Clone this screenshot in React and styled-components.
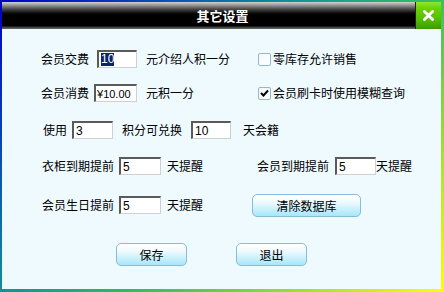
import React from 'react'
import styled, { createGlobalStyle } from 'styled-components'

const GlobalStyle = createGlobalStyle`
  html, body {
    margin: 0;
    padding: 0;
    background: #ffffff;
  }
  body {
    font-family: "Liberation Sans", "Noto Sans CJK SC", sans-serif;
    font-size: 12px;
    color: #000;
  }
`

function Check({ checked }) {
  return (
    <CheckBox>
      {checked && (
        <svg width="9" height="8" viewBox="0 0 9 8">
          <path d="M1 4 L3.5 6.5 L8 1.5" fill="none" stroke="#000" strokeWidth="2" />
        </svg>
      )}
    </CheckBox>
  )
}

function App() {
  return (
    <>
      <GlobalStyle />
      <Frame>
        <Window>
          <TitleBar>
            <Caption>其它设置</Caption>
            <CloseButton>
              <svg width="11" height="11" viewBox="0 0 11 11">
                <path d="M1.5 1.5 L9.5 9.5 M9.5 1.5 L1.5 9.5" stroke="#fff" strokeWidth="2.8" strokeLinecap="square" />
              </svg>
            </CloseButton>
          </TitleBar>

          <Body>
            <Row $top={0}>
              <LeftCell>
                <Label>会员交费</Label>
                <Field $w={40} $ml={8}><Selected>10</Selected></Field>
                <Label $ml={9}>元介绍人积一分</Label>
              </LeftCell>
              <CheckLabel>
                <Check />
                <Label $ml={2}>零库存允许销售</Label>
              </CheckLabel>
            </Row>

            <Row $top={10}>
              <LeftCell>
                <Label>会员消费</Label>
                <Field $w={43} $ml={5} $tight>¥10.00</Field>
                <Label $ml={9}>元积一分</Label>
              </LeftCell>
              <CheckLabel>
                <Check checked />
                <Label $ml={2}>会员刷卡时使用模糊查询</Label>
              </CheckLabel>
            </Row>

            <Row $top={13}>
              <Label $ml={2}>使用</Label>
              <Field $w={41} $ml={5}>3</Field>
              <Label $ml={9}>积分可兑换</Label>
              <Field $w={40} $ml={9}>10</Field>
              <Label $ml={12}>天会籍</Label>
            </Row>

            <Row $top={12}>
              <LeftCell>
                <Label $ml={1}>衣柜到期提前</Label>
                <Field $w={42} $ml={5}>5</Field>
                <Label $ml={6}>天提醒</Label>
              </LeftCell>
              <Label $ml={-1}>会员到期提前</Label>
              <Field $w={41} $ml={6}>5</Field>
              <Label>天提醒</Label>
            </Row>

            <Row $top={15}>
              <LeftCell $w={211}>
                <Label $ml={1}>会员生日提前</Label>
                <Field $w={42} $ml={5}>5</Field>
                <Label $ml={6}>天提醒</Label>
              </LeftCell>
              <Button $w={109}>清除数据库</Button>
            </Row>

            <Row $top={25}>
              <Button $w={71} $ml={75}>保存</Button>
              <Button $w={71} $ml={49}>退出</Button>
            </Row>
          </Body>
        </Window>
      </Frame>
    </>
  )
}

export default App

const Frame = styled.div`
  width: 444px;
  height: 292px;
  box-sizing: border-box;
  padding: 2px 3px 3px 2px;
  background: linear-gradient(135deg, #0000c4 0%, #0a5ab0 25%, #109a90 42%, #38c060 60%, #b8e820 85%, #ffff00 100%);
`

const Window = styled.div`
  height: 100%;
  display: flex;
  flex-direction: column;
  background: #effaff;
`

const TitleBar = styled.div`
  height: 27px;
  display: flex;
  flex-shrink: 0;
`

const Caption = styled.div`
  flex: 1;
  padding-left: 28px;
  display: flex;
  align-items: center;
  justify-content: center;
  color: #ffffff;
  font-weight: bold;
  font-size: 13px;
  font-family: "Noto Sans CJK SC", sans-serif;
  background: linear-gradient(#d2d2d2 0px, #9a9a9a 3px, #4a4a4a 7px, #0c0c0c 11px, #000 13px, #000 24px, #3a3a3a 25px, #6a6a6a 27px);
  border-right: 1px solid #202020;
`

const CloseButton = styled.div`
  width: 25px;
  display: flex;
  align-items: center;
  justify-content: center;
  background: linear-gradient(#8fe830 0px, #6ad400 6px, #58c000 16px, #3e9a00 27px);
`

const Body = styled.div`
  flex: 1;
  display: flex;
  flex-direction: column;
  padding: 18px 0 0 39px;
`

const Row = styled.div`
  display: flex;
  align-items: center;
  height: 24px;
  margin-top: ${p => p.$top}px;
`

const LeftCell = styled.div`
  display: flex;
  align-items: center;
  width: ${p => p.$w || 217}px;
  flex-shrink: 0;
`

const Label = styled.span`
  margin-left: ${p => p.$ml || 0}px;
  white-space: nowrap;
  line-height: 14px;
  font-family: "Noto Sans CJK SC", sans-serif;
  font-size: 12px;
`

const Field = styled.div`
  width: ${p => p.$w}px;
  height: 18px;
  margin-left: ${p => p.$ml || 0}px;
  box-sizing: border-box;
  display: flex;
  align-items: center;
  padding-left: ${p => (p.$tight ? 1 : 2)}px;
  background: #ffffff;
  border-style: solid;
  border-width: 2px 1px 1px 2px;
  border-color: #5a5a5a #d0d0d0 #d0d0d0 #5a5a5a;
  font-family: "Liberation Sans", "Noto Sans CJK SC", sans-serif;
  font-size: ${p => (p.$tight ? 11 : 12)}px;
  overflow: hidden;
  white-space: pre;
  flex-shrink: 0;
`

const Selected = styled.span`
  background: #0a246a;
  color: #ffffff;
  line-height: 13px;
`

const CheckLabel = styled.label`
  display: flex;
  align-items: center;
`

const CheckBox = styled.span`
  width: 13px;
  height: 13px;
  box-sizing: border-box;
  border: 1px solid #93b6d6;
  border-radius: 2px;
  background: linear-gradient(135deg, #f4f8fc, #ffffff);
  display: flex;
  align-items: center;
  justify-content: center;
`

const Button = styled.div`
  width: ${p => p.$w}px;
  height: 23px;
  margin-left: ${p => p.$ml || 0}px;
  box-sizing: border-box;
  display: flex;
  align-items: center;
  justify-content: center;
  border: 1px solid #86bcd8;
  border-radius: 5px;
  background: linear-gradient(#ffffff 0%, #eefafe 35%, #c6f0fb 70%, #a8e6f8 100%);
  font-family: "Noto Sans CJK SC", sans-serif;
  font-size: 12px;
  flex-shrink: 0;
`
